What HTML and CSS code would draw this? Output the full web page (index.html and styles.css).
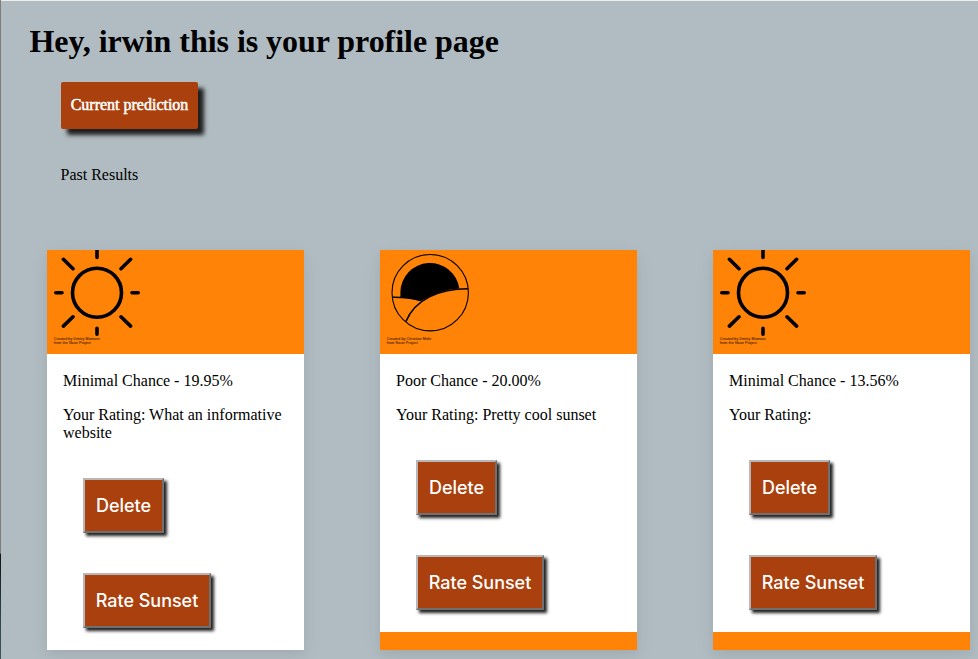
FILE: index.html
```html
<!DOCTYPE html>
<html lang="en">
<head>
<meta charset="utf-8">
<title>Profile</title>
<link rel="stylesheet" href="styles.css">
</head>
<body>
<main class="page">
  <h1>Hey, irwin this is your profile page</h1>
  <a class="prediction">Current prediction</a>
  <p class="past">Past Results</p>
  <section class="cards">
    <article class="card">
      <header>
        <svg class="icon" viewBox="0 0 100 104">
          <g fill="none" stroke="#000" stroke-width="3.6" stroke-linecap="round">
            <circle cx="50" cy="42.7" r="24.5"/>
            <path d="M50 0V7.5M50 78.2V84.3M8.8 42.7H15M85 42.7H91.2M16.4 9.3L26 18.7M83.6 9.3L74 18.7M16.4 76.1L26 66.8M83.6 76.1L74 66.8"/>
          </g>
          <text class="credit" x="6.8" y="90.2" textLength="46">Created by Dmitry Mamaev</text>
          <text class="credit" x="6.8" y="94" textLength="37">from the Noun Project</text>
        </svg>
      </header>
      <div class="content">
        <p>Minimal Chance - 19.95%</p>
        <p>Your Rating: What an informative website</p>
        <button class="delete">Delete</button>
        <button class="rate">Rate Sunset</button>
      </div>
    </article>
    <article class="card">
      <header>
        <svg class="icon" viewBox="0 0 100 104">
          <circle cx="50.2" cy="42.7" r="38.2" fill="none" stroke="#000" stroke-width="1.1"/>
          <path d="M20.4 47.5V42A29.6 29.6 0 0 1 79.3 38.5Q58 40 41 51Q31 48 20.4 47.5Z"/>
          <path d="M12 47.3Q28 47 40.5 50.5M25.8 71.8C35 49 60 38.5 88.3 38.7" fill="none" stroke="#000" stroke-width="1.6"/>
          <text class="credit" x="6.8" y="90.2" textLength="44.5">Created by Christian Mohr</text>
          <text class="credit" x="6.8" y="94" textLength="31">from Noun Project</text>
        </svg>
      </header>
      <div class="content">
        <p>Poor Chance - 20.00%</p>
        <p>Your Rating: Pretty cool sunset</p>
        <button class="delete">Delete</button>
        <button class="rate">Rate Sunset</button>
      </div>
    </article>
    <article class="card">
      <header>
        <svg class="icon" viewBox="0 0 100 104">
          <g fill="none" stroke="#000" stroke-width="3.6" stroke-linecap="round">
            <circle cx="50" cy="42.7" r="24.5"/>
            <path d="M50 0V7.5M50 78.2V84.3M8.8 42.7H15M85 42.7H91.2M16.4 9.3L26 18.7M83.6 9.3L74 18.7M16.4 76.1L26 66.8M83.6 76.1L74 66.8"/>
          </g>
          <text class="credit" x="6.8" y="90.2" textLength="46">Created by Dmitry Mamaev</text>
          <text class="credit" x="6.8" y="94" textLength="37">from the Noun Project</text>
        </svg>
      </header>
      <div class="content">
        <p>Minimal Chance - 13.56%</p>
        <p>Your Rating:</p>
        <button class="delete">Delete</button>
        <button class="rate">Rate Sunset</button>
      </div>
    </article>
  </section>
</main>
</body>
</html>
```
FILE: styles.css
```css
* { box-sizing: border-box; }
body {
  margin: 0;
  height: 659px;
  overflow: hidden;
  background: #b1bcc2;
  color: #000;
  font: 16px/18px "Liberation Serif", serif;
}
.page {
  height: 659px;
  border-left: 1px solid;
  border-image: linear-gradient(#827c7b 0 552px, #101414 554px, #2d484c 620px, #405558) 1;
  box-shadow: inset 0 1px #eeeeee;
  display: flex;
  flex-direction: column;
  align-items: flex-start;
}
h1 { margin: 23px 0 0 28.5px; font-size: 32px; line-height: 37px; letter-spacing: -0.04px; white-space: nowrap; }
.prediction {
  display: block;
  width: 137px;
  height: 47px;
  margin: 22px 0 0 60px;
  border-radius: 2px;
  background: #aa400d;
  color: #fff;
  line-height: 46px;
  text-align: center;
  -webkit-text-stroke: 0.5px #fff;
  box-shadow: 6px 6px 4px #202020;
}
.past { margin: 37px 0 0 59.5px; }
.cards { display: grid; grid-template-columns: repeat(3, 257px); gap: 76px; margin: 66px 0 0 46px; }
.card { height: 400px; background: #ff8307; box-shadow: 0 4px 8px rgba(0,0,0,.04), 0 6px 20px rgba(0,0,0,.06); }
.card header { height: 104px; }
.icon { display: block; width: 100px; height: 104px; }
.credit { font: 3.6px "Liberation Sans", sans-serif; }
.content {
  display: flex;
  flex-direction: column;
  align-items: flex-start;
  padding: 18px 16px 22px;
  background: #fff;
}
.content p { margin: 0 0 16px; }
button {
  height: 55px;
  margin: 20px 0 0 20px;
  padding: 0;
  border: 2px solid;
  border-color: #b7b7b7 #707070 #707070 #b7b7b7;
  border-radius: 0;
  background: #aa400d;
  color: #fff;
  font: 500 18px Inter, sans-serif;
  letter-spacing: -0.03px;
  box-shadow: 3px 3px 3px #222;
}
.delete { width: 81px; }
.rate { width: 128px; margin-top: 40px; }
```
